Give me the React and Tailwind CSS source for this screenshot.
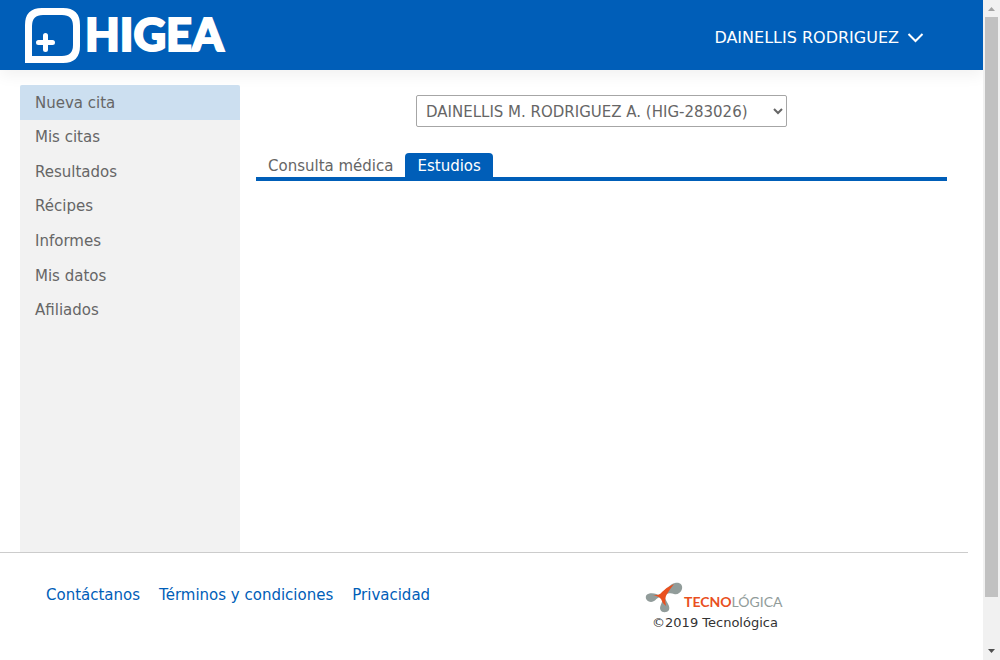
const menu = ["Nueva cita", "Mis citas", "Resultados", "Récipes", "Informes", "Mis datos", "Afiliados"];

function HigeaLogo() {
  return (
    <svg width="210" height="58" viewBox="0 0 210 58" role="img" aria-label="Higea">
      <path
        fillRule="evenodd"
        fill="#fff"
        d="M0 55V17Q0 0 17 0H38Q55 0 55 17V38Q55 55 38 55ZM7 48H37Q48 48 48 37V18Q48 7 37 7H18Q7 7 7 18Z"
      />
      <path d="M20.500 27.500V41.500M13.500 34.500H27.500" stroke="#fff" strokeWidth="5" strokeLinecap="round" />
      <text x="60" y="43" fill="#fff" stroke="#fff" strokeWidth="2" className="font-['Lato'] text-[45px] font-black">HIGEA</text>
    </svg>
  );
}

function TecnologicaLogo() {
  return (
    <svg width="140" height="32" viewBox="0 0 140 32" role="img" aria-label="Tecnológica">
      <g fill="#919c9a">
        <path d="M15 14C12 11 4 10 1.500 13C-0.500 16 2 20 6 20C10 20 11 16 15 15Z" />
        <path d="M18 17C17 21 14 25 15.500 28C17 31 22 31 24 28C25.500 24 22 21 20 16Z" />
        <path d="M19 9C23 6 25 2 30 1C35 0 38 3 37 7C36 11 32 13 29 12C26 11 23 11 20 13Z" />
      </g>
      <path fill="#e9501e" d="M7 13Q14 14 17 10Q22 5 29 2Q25 7 22 12Q19 16 21 24Q17 21 16 17Q14 14 7 13Z" />
      <text x="39" y="25" fill="#e9501e" className="font-['Lato'] text-[14px] font-bold">
        TECNO<tspan fill="#919c9a" fontWeight="400">LÓGICA</tspan>
      </text>
    </svg>
  );
}

function ScrollRail() {
  return (
    <div aria-hidden="true" className="flex w-[17px] shrink-0 flex-col items-center justify-between bg-[#f1f1f1]">
      <svg width="17" height="17" viewBox="0 0 17 17"><path fill="#a3a3a3" d="M5 11L8.500 7L12 11Z" /></svg>
      <div className="mb-[46px] w-[13px] flex-1 bg-[#c1c1c1]" />
      <svg width="17" height="17" viewBox="0 0 17 17"><path fill="#505050" d="M5 6L8.500 10L12 6Z" /></svg>
    </div>
  );
}

export default function App() {
  return (
    <div className="flex min-h-screen bg-white font-['DejaVu_Sans',sans-serif] text-[15px] leading-5 text-[#666]">
      <div className="flex min-w-0 flex-1 flex-col">
        <header className="flex h-[70px] items-center justify-between bg-[#005eb8] pr-[59px] pl-[25px] shadow-[0_5px_15px_rgba(0,0,0,0.06)]">
          <a href="#inicio" className="mt-1"><HigeaLogo /></a>
          <button type="button" className="mt-1.5 flex items-center gap-2 text-[16px] text-white">
            DAINELLIS RODRIGUEZ
            <svg width="17" height="12" viewBox="0 0 17 12" fill="none" stroke="#fff" strokeWidth="2"><path d="M1.500 2L8.500 9L15.500 2" /></svg>
          </button>
        </header>
        <div className="flex flex-1 pt-[15px] pr-9 pl-5">
          <nav className="w-[220px] shrink-0 rounded-t-xs bg-[#f2f2f2]">
            <ul className="grid h-[242px] auto-rows-fr">
              {menu.map((item, i) => (
                <li key={item} className={i === 0 ? "rounded-t-xs bg-[#ccdff0]" : ""}>
                  <a href="#menu" className="flex h-full items-center px-[15px] pt-px">{item}</a>
                </li>
              ))}
            </ul>
          </nav>
          <main className="ml-4 flex-1 pt-[10px]">
            <div className="flex justify-center">
              <select aria-label="Paciente" className="h-8 w-[371px] rounded-xs border border-[#a6a6a6] bg-white px-[5px] pt-px">
                <option>DAINELLIS M. RODRIGUEZ A. (HIG-283026)</option>
              </select>
            </div>
            <div role="tablist" className="mt-[26px] flex border-b-4 border-[#005eb8]">
              <button type="button" role="tab" aria-selected="false" className="h-6 px-3 pt-0.5">Consulta médica</button>
              <button type="button" role="tab" aria-selected="true" className="h-6 rounded-t bg-[#005eb8] px-3 pt-0.5 text-white">Estudios</button>
            </div>
          </main>
        </div>
        <footer className="mr-[15px] flex h-[108px] items-start border-t border-[#ccc]">
          <div className="flex flex-1 gap-[19px] pt-8 pl-[46px] text-[#005eb8]">
            <a href="#contacto">Contáctanos</a>
            <a href="#terminos">Términos y condiciones</a>
            <a href="#privacidad">Privacidad</a>
          </div>
          <div className="mr-[183px] flex flex-col items-center pt-[29px] text-[13px] text-[#333]">
            <TecnologicaLogo />
            <span className="leading-[18px]">©2019 Tecnológica</span>
          </div>
        </footer>
      </div>
      <ScrollRail />
    </div>
  );
}
